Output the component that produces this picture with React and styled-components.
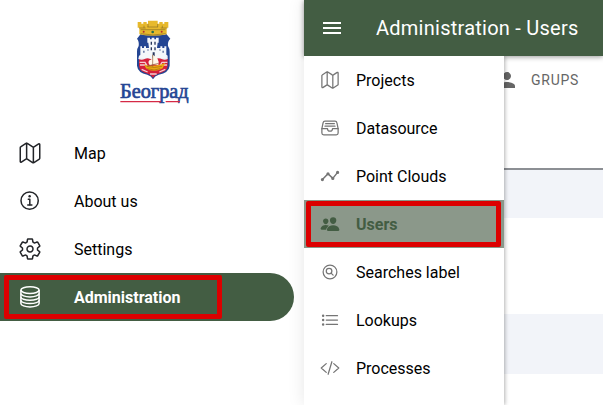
import React from "react";
import styled, { createGlobalStyle, css } from "styled-components";
import {
  IoMapOutline,
  IoInformationCircleOutline,
  IoSettingsOutline,
  IoFileTrayFullOutline,
  IoPeople,
  IoSearchCircleOutline,
  IoListOutline,
  IoCodeSlashOutline,
} from "react-icons/io5";
import { MdMenu, MdPerson } from "react-icons/md";

const GREEN = "#435d43";

const GlobalStyle = createGlobalStyle`
  *, *::before, *::after { box-sizing: border-box; }
  body {
    margin: 0;
    background: #fff;
    color: #000;
    font-family: Roboto, "Liberation Sans", sans-serif;
    font-size: 16px;
    line-height: 24px;
    overflow: hidden;
  }
  button { font: inherit; border: 0; background: none; padding: 0; cursor: pointer; }
  a { color: inherit; text-decoration: none; }
`;

const Layout = styled.div`
  display: grid;
  grid-template-columns: 304px minmax(0, 1fr);
  min-height: 100vh;
`;

const Sidebar = styled.aside`
  display: flex;
  flex-direction: column;
`;

const LogoLink = styled.a`
  display: flex;
  justify-content: center;
  padding: 20px 0;
  width: 308px;
`;

const LogoArt = styled.svg`
  display: block;
  width: 69px;
  height: 89px;
  overflow: visible;
`;

const NavList = styled.ul`
  list-style: none;
  margin: 0;
  padding: 0;
`;

const SideLink = styled.a`
  position: relative;
  display: flex;
  align-items: center;
  gap: 32px;
  height: 48px;
  margin-right: 10px;
  padding-left: 18px;
  border-radius: 0 24px 24px 0;
  svg { width: 24px; height: 24px; color: #222428; }
  ${({ $active }) =>
    $active &&
    css`
      background: ${GREEN};
      color: #fff;
      font-weight: 700;
      svg { color: #fff; }
    `}
`;

const ItemLabel = styled.span`
  padding-top: 2px;
`;

const Highlight = styled.span`
  position: absolute;
  inset: ${({ $inset }) => $inset};
  border: 5px solid #dc0000;
  border-radius: 2px;
  pointer-events: none;
`;

const Page = styled.div`
  display: flex;
  flex-direction: column;
  background: #fff;
  box-shadow: 0 0 16px rgba(0, 0, 0, 0.1);
`;

const Toolbar = styled.header`
  position: relative;
  z-index: 1;
  display: flex;
  align-items: center;
  gap: 32px;
  height: 56px;
  padding: 0 16px;
  background: ${GREEN};
  color: #fff;
  box-shadow: 0 1px 5px rgba(0, 0, 0, 0.4);
`;

const MenuButton = styled.button`
  display: flex;
  flex: none;
  width: 24px;
  color: #fff;
  svg { width: 24px; height: 24px; }
`;

const Title = styled.h1`
  margin: 0;
  font-size: 20px;
  font-weight: 400;
  line-height: 28px;
  letter-spacing: 0.0125em;
  white-space: nowrap;
`;

const Body = styled.div`
  position: relative;
  flex: 1;
`;

const Drawer = styled.nav`
  position: absolute;
  inset: 0 auto 0 0;
  z-index: 2;
  width: 200px;
  background: #fff;
  box-shadow: 1px 0 4px rgba(0, 0, 0, 0.3);
  clip-path: inset(0 -8px 0 0);
`;

const DrawerLink = styled.a`
  position: relative;
  display: flex;
  align-items: center;
  gap: 16px;
  height: 48px;
  padding-left: 16px;
  svg { width: 20px; height: 20px; color: #757575; }
  ${({ $active }) =>
    $active &&
    css`
      background: #8b988a;
      color: ${GREEN};
      font-weight: 700;
      svg { color: ${GREEN}; }
    `}
`;

const Tabs = styled.div`
  display: flex;
  justify-content: flex-end;
  height: 48px;
  padding-right: 24px;
`;

const Tab = styled.button`
  display: flex;
  align-items: center;
  gap: 12px;
  color: #666;
  font-size: 14px;
  font-weight: 400;
  letter-spacing: 0.05em;
  svg { width: 24px; height: 24px; }
`;

const DataTable = styled.table`
  width: 100%;
  border-collapse: collapse;
  th { height: 65px; border-bottom: 2px solid #8c8f94; }
`;

const DataRow = styled.tr`
  height: ${({ $height }) => $height}px;
  background: ${({ $shaded }) => ($shaded ? "#f2f4f9" : "#fff")};
`;

function DiscStackIcon(props) {
  return (
    <svg viewBox="0 0 24 24" fill="none" stroke="currentColor" strokeWidth="1.5" {...props}>
      <ellipse cx="12" cy="5.1" rx="9.1" ry="3.3" />
      <path d="M2.9 5.1v13.3c0 1.9 4.1 3.6 9.1 3.6s9.1-1.7 9.1-3.6V5.1" />
      <path d="M2.9 8.5c0 1.9 4.1 3.4 9.1 3.4s9.1-1.5 9.1-3.4M2.9 11.9c0 1.9 4.1 3.4 9.1 3.4s9.1-1.5 9.1-3.4M2.9 15.2c0 1.9 4.1 3.4 9.1 3.4s9.1-1.5 9.1-3.4" />
    </svg>
  );
}

function TrendIcon(props) {
  return (
    <svg viewBox="0 0 20 20" fill="none" stroke="currentColor" strokeLinecap="round" strokeLinejoin="round" {...props}>
      <path d="M2.4 13.6L8 7.8l4.8 4.6 4.8-6" strokeWidth="1.5" />
      <path d="M2.4 13.6h0M8 7.8h0M12.8 12.4h0M17.6 6.4h0" strokeWidth="3.2" />
    </svg>
  );
}

function Logo() {
  return (
    <LogoArt viewBox="29 30 207 267" role="img" aria-label="Београд">
      <path
        d="M80 86l11-14q11 6 22 0h32q12 6 23 0l12 14q-9 8-7 22 5 7 5 17v42q-2 21-33 27-12 4-17 14-5-10-17-14-29-6-31-27v-42q0-10 5-17 2-14-5-22z"
        fill="#244593"
      />
      <path d="M86 144h86v24q-1 17-30 24-9 3-14 11-5-8-14-11-27-7-28-24z" fill="#d5203b" />
      <path d="M86 137q9-5 18 0t18 0 18 0 18 0 14 0v10q-9 5-18 0t-17 0-17 0-17 0-19 0z" fill="#eef1f8" />
      <path
        d="M90 144v-35h5v5h6v-5h6v5h9l-2-16h-3V83h8v5h5v-5h8v5h5v-5h8v15h-3l-2 16h10v-5h6v5h6v-5h6v35z"
        fill="#f5f7fb"
      />
      <path d="M121 95h4v9h-4zM132 95h4v9h-4zM121 112h4v9h-4zM132 112h4v9h-4zM127 127h6v17h-6z" fill="#25345c" />
      <path d="M98 122h5v6h-5zM156 122h5v6h-5zM111 118h4v4h-4zM147 118h4v4h-4z" fill="#7383ac" />
      <path
        d="M88 157h16l5 8H89M171 157h-16l-5 8h20M94 178l18 8M165 178l-18 8M119 192h20"
        stroke="#f3ced2"
        strokeWidth="4"
        fill="none"
      />
      <path d="M101 163q12 9 54 0l10-5-8 17q-27 15-50 0z" fill="#e9a90f" />
      <path d="M109 169q23 7 46 0M111 176q21 8 39 0" stroke="#a66717" strokeWidth="2" fill="none" />
      <path d="M127 134q23 12 17 31-13-4-25 1-8-8-2-15 12-3 10-17z" fill="#fff7e8" />
      <path d="M127 134v36M111 168l34-8" stroke="#8f5b35" strokeWidth="2" />
      <path
        d="M82 36h11v5h6v-5h10v5h4v-9h29v9h5v-5h10v5h5v-5h12v17h-5v20q-41 9-82 0V53h-5z"
        fill="#e7b92c"
      />
      <path
        d="M86 54h20M111 51h32M151 54h20M113 42v9M142 42v9M101 47v7M156 47v7M91 71q37 8 75 0M91 59h74"
        stroke="#8d7126"
        strokeWidth="2"
        fill="none"
      />
      <circle cx="100" cy="65" r="3" fill="#b5302d" />
      <circle cx="127" cy="66" r="4" fill="#28704b" />
      <circle cx="154" cy="65" r="3" fill="#b5302d" />
      <text
        x="29"
        y="265"
        fontFamily="'Liberation Serif', serif"
        fontSize="61"
        fill="#254694"
        stroke="#254694"
        strokeWidth="2"
      >
        Београд
      </text>
      <path d="M30 275h122M166 275h43" stroke="#d52a46" strokeWidth="4" />
    </LogoArt>
  );
}

const sideItems = [
  { label: "Map", Icon: IoMapOutline },
  { label: "About us", Icon: IoInformationCircleOutline },
  { label: "Settings", Icon: IoSettingsOutline },
  { label: "Administration", Icon: DiscStackIcon, active: true },
];

const drawerItems = [
  { label: "Projects", Icon: IoMapOutline },
  { label: "Datasource", Icon: IoFileTrayFullOutline },
  { label: "Point Clouds", Icon: TrendIcon },
  { label: "Users", Icon: IoPeople, active: true },
  { label: "Searches label", Icon: IoSearchCircleOutline },
  { label: "Lookups", Icon: IoListOutline },
  { label: "Processes", Icon: IoCodeSlashOutline },
];

const rows = [
  { height: 49, shaded: true },
  { height: 96, shaded: false },
  { height: 60, shaded: true },
];

export default function App() {
  return (
    <>
      <GlobalStyle />
      <Layout>
        <Sidebar>
          <LogoLink href="#home">
            <Logo />
          </LogoLink>
          <nav aria-label="Main">
            <NavList>
              {sideItems.map(({ label, Icon, active }) => (
                <li key={label}>
                  <SideLink href="#" $active={active} aria-current={active ? "page" : undefined}>
                    <Icon aria-hidden="true" />
                    <ItemLabel>{label}</ItemLabel>
                    {active && <Highlight $inset="2px 72px 2px 4px" />}
                  </SideLink>
                </li>
              ))}
            </NavList>
          </nav>
        </Sidebar>
        <Page>
          <Toolbar>
            <MenuButton type="button" aria-label="Menu">
              <MdMenu />
            </MenuButton>
            <Title>Administration - Users</Title>
          </Toolbar>
          <Body>
            <Drawer aria-label="Administration">
              <NavList>
                {drawerItems.map(({ label, Icon, active }) => (
                  <li key={label}>
                    <DrawerLink href="#" $active={active} aria-current={active ? "page" : undefined}>
                      <Icon aria-hidden="true" />
                      <ItemLabel>{label}</ItemLabel>
                      {active && <Highlight $inset="1px 3px 1px 2px" />}
                    </DrawerLink>
                  </li>
                ))}
              </NavList>
            </Drawer>
            <main>
              <Tabs role="tablist">
                <Tab type="button" role="tab">
                  <MdPerson aria-hidden="true" />
                  GRUPS
                </Tab>
              </Tabs>
              <DataTable>
                <thead>
                  <tr>
                    <th scope="col" />
                  </tr>
                </thead>
                <tbody>
                  {rows.map(({ height, shaded }, i) => (
                    <DataRow key={i} $height={height} $shaded={shaded}>
                      <td />
                    </DataRow>
                  ))}
                </tbody>
              </DataTable>
            </main>
          </Body>
        </Page>
      </Layout>
    </>
  );
}
